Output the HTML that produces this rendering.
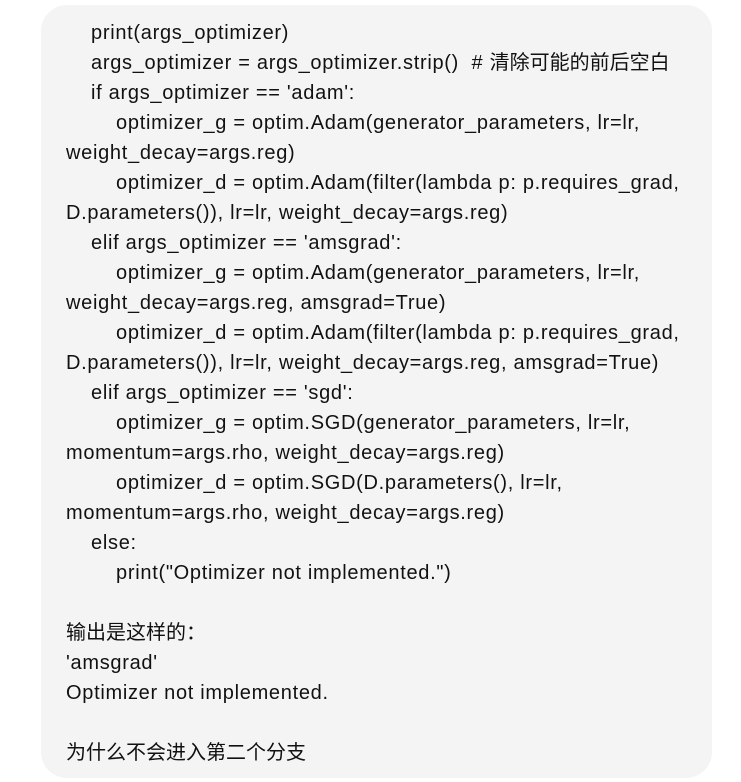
<!DOCTYPE html>
<html><head><meta charset="utf-8"><style>
html,body{margin:0;padding:0;background:#fff;width:741px;height:782px;overflow:hidden}
.b{position:absolute;left:41px;top:5px;width:671px;height:773px;background:#f4f4f4;border-radius:26px}
.t{position:absolute;left:66px;top:18px;font-family:"Liberation Sans","Noto Sans CJK SC",sans-serif;font-size:20px;letter-spacing:0.7px;line-height:30px;color:#111;white-space:pre}
.c{letter-spacing:0}
</style></head><body>
<div class="b"></div>
<div class="t">    print(args_optimizer)
    args_optimizer = args_optimizer.strip()  # <span class="c">清除可能的前后空白</span>
    if args_optimizer == 'adam':
        optimizer_g = optim.Adam(generator_parameters, lr=lr,
weight_decay=args.reg)
        optimizer_d = optim.Adam(filter(lambda p: p.requires_grad,
D.parameters()), lr=lr, weight_decay=args.reg)
    elif args_optimizer == 'amsgrad':
        optimizer_g = optim.Adam(generator_parameters, lr=lr,
weight_decay=args.reg, amsgrad=True)
        optimizer_d = optim.Adam(filter(lambda p: p.requires_grad,
D.parameters()), lr=lr, weight_decay=args.reg, amsgrad=True)
    elif args_optimizer == 'sgd':
        optimizer_g = optim.SGD(generator_parameters, lr=lr,
momentum=args.rho, weight_decay=args.reg)
        optimizer_d = optim.SGD(D.parameters(), lr=lr,
momentum=args.rho, weight_decay=args.reg)
    else:
        print("Optimizer not implemented.")

<span class="c">输出是这样的：</span>
'amsgrad'
Optimizer not implemented.

<span class="c">为什么不会进入第二个分支</span></div>
</body></html>
